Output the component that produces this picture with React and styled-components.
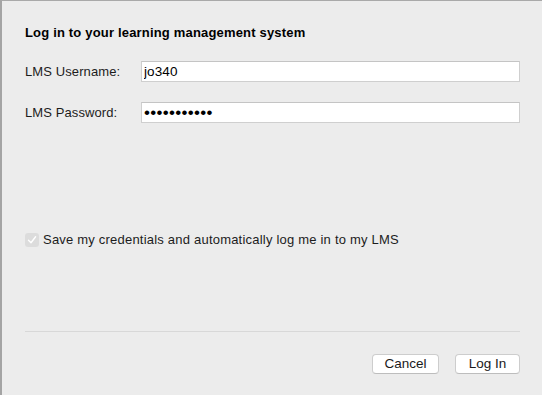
import React from "react";
import styled, { createGlobalStyle } from "styled-components";

const Global = createGlobalStyle`
  html, body { margin: 0; padding: 0; background: #ececec; }
  body { font-family: "Liberation Sans", Arial, sans-serif; }
  * { box-sizing: border-box; }
`;

const Window = styled.div`
  width: 542px;
  height: 395px;
  background: #ececec;
  border-top: 1px solid #a9a9a9;
  border-left: 2px solid #a4a4a4;
  padding: 24px 22px 0 23px;
  display: flex;
  flex-direction: column;
  color: #1a1a1a;
  font-size: 13px;
  overflow: hidden;
`;

const Title = styled.h1`
  margin: 0;
  font-size: 13px;
  line-height: 16px;
  font-weight: bold;
  letter-spacing: 0.18px;
  color: #000;
`;

const Form = styled.div`
  margin-top: 20px;
  display: grid;
  grid-template-columns: 116px 1fr;
  row-gap: 20px;
  align-items: center;
`;

const Label = styled.label`
  font-size: 13px;
  line-height: 16px;
  letter-spacing: 0.1px;
  color: #1c1c1c;
`;

const Field = styled.input`
  height: 21px;
  width: 100%;
  border: 1px solid #cfcfcf;
  border-top-color: #c4c4c4;
  background: #fff;
  padding: 0 0 0 2px;
  margin: 0;
  font-family: "Liberation Sans", Arial, sans-serif;
  font-size: ${(p) => (p.type === "password" ? "17px" : "13.5px")};
  letter-spacing: ${(p) => (p.type === "password" ? "0.3px" : "0.1px")};
  color: #000;
  outline: none;
  border-radius: 0;
`;

const CheckRow = styled.div`
  margin-top: 109px;
  display: flex;
  align-items: center;
  gap: 4px;
  height: 16px;
`;

const Box = styled.span`
  width: 14px;
  height: 14px;
  border-radius: 3px;
  background: #dcdcdc;
  display: flex;
  align-items: center;
  justify-content: center;
`;

const CheckText = styled.span`
  font-size: 13px;
  line-height: 16px;
  letter-spacing: 0.21px;
  color: #1c1c1c;
`;

const Separator = styled.hr`
  margin: 83px 0 0 0;
  border: none;
  border-top: 1px solid #d8d8d8;
  height: 0;
`;

const ButtonBar = styled.div`
  margin-top: 22px;
  display: flex;
  justify-content: flex-end;
  gap: 16px;
`;

const Button = styled.button`
  width: ${(p) => p.$w}px;
  height: 20px;
  background: #fff;
  border: 1px solid #cdcdcd;
  border-bottom-color: #bdbdbd;
  border-radius: 4px;
  font-family: "Liberation Sans", Arial, sans-serif;
  font-size: 13.5px;
  color: #1a1a1a;
  padding: 0;
  margin: 0;
  line-height: 18px;
`;

export default function App() {
  return (
    <>
      <Global />
      <Window>
        <Title>Log in to your learning management system</Title>
        <Form>
          <Label>LMS Username:</Label>
          <Field type="text" defaultValue="jo340" />
          <Label>LMS Password:</Label>
          <Field type="password" defaultValue="secretpassw" />
        </Form>
        <CheckRow>
          <Box>
            <svg width="10" height="10" viewBox="0 0 10 10">
              <path d="M1.5 5.3 L4 7.8 L8.6 1.8" fill="none" stroke="#fff" strokeWidth="1.4" strokeLinecap="round" strokeLinejoin="round" />
            </svg>
          </Box>
          <CheckText>Save my credentials and automatically log me in to my LMS</CheckText>
        </CheckRow>
        <Separator />
        <ButtonBar>
          <Button $w={67}>Cancel</Button>
          <Button $w={65}>Log In</Button>
        </ButtonBar>
      </Window>
    </>
  );
}
